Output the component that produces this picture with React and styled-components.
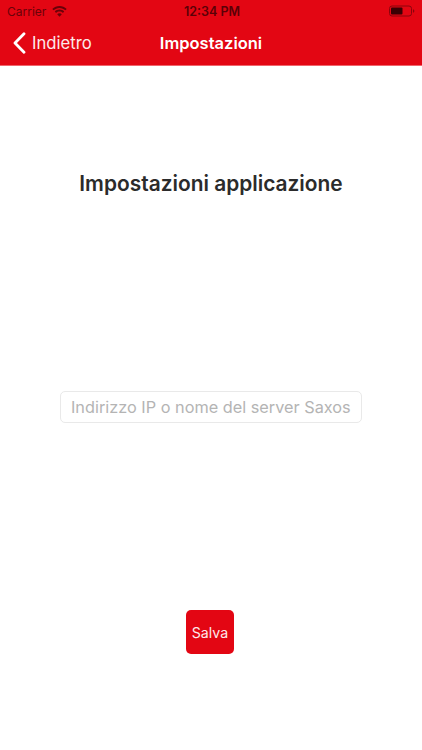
import React from "react";
import styled, { createGlobalStyle } from "styled-components";

const GlobalStyle = createGlobalStyle`
  html, body { margin: 0; padding: 0; background: #fff; }
  body { font-family: Inter, "Liberation Sans", sans-serif; }
`;

const Page = styled.div`
  width: 422px;
  height: 750px;
  display: flex;
  flex-direction: column;
  overflow: hidden;
`;

const Header = styled.header`
  height: 65px;
  background: #e30613;
  border-bottom: 1px solid #f0656c;
  box-sizing: content-box;
  display: flex;
  flex-direction: column;
`;

const StatusBar = styled.div`
  height: 22px;
  padding: 0 7px;
  display: grid;
  grid-template-columns: 1fr auto 1fr;
  align-items: center;
  color: #6a0209;
  font-size: 12px;
`;

const Carrier = styled.div`
  display: flex;
  align-items: center;
  gap: 6px;
`;

const Clock = styled.div`
  font-weight: 600;
  font-size: 12.5px;
  color: #5a0107;
  margin-left: 2px;
`;

const BatteryWrap = styled.div`
  justify-self: end;
  display: flex;
`;

const NavBar = styled.div`
  flex: 1;
  position: relative;
  display: flex;
  align-items: center;
  justify-content: center;
  color: #fff;
`;

const Back = styled.div`
  position: absolute;
  left: 13px;
  top: 0;
  bottom: 2px;
  display: flex;
  align-items: center;
  gap: 6px;
  font-size: 16.7px;
  color: #fde9ea;
`;

const NavTitle = styled.div`
  font-size: 16.5px;
  font-weight: 600;
  margin-bottom: 2px;
`;

const Main = styled.main`
  flex: 1;
  display: flex;
  flex-direction: column;
  align-items: center;
`;

const Title = styled.h1`
  margin: 105px 0 0;
  font-size: 20.9px;
  line-height: 26px;
  font-weight: 600;
  color: #2b2b2b;
`;

const Field = styled.input`
  margin-top: 194px;
  width: 302px;
  height: 32px;
  box-sizing: border-box;
  padding: 0 10px;
  border: 1px solid #e9e9e9;
  border-radius: 5px;
  font-family: inherit;
  font-size: 16.3px;
  background: #fff;
  &::placeholder { color: #b4b4b4; opacity: 1; }
`;

const SaveButton = styled.button`
  margin-top: 187px;
  margin-right: 2px;
  width: 48px;
  height: 44px;
  padding: 0;
  border: none;
  border-radius: 5px;
  background: #e30613;
  color: #fde9ea;
  font-family: inherit;
  font-size: 14.2px;
`;

const Wifi = () => (
  <svg width="15" height="11" viewBox="0 0 15 11" fill="#6a0209">
    <path d="M7.5 0C4.7 0 2.2 1.1.3 2.9l1.3 1.4C3.1 2.8 5.2 1.9 7.5 1.9s4.4.9 5.9 2.4l1.3-1.4C12.8 1.1 10.3 0 7.5 0z" />
    <path d="M7.5 3.6c-1.8 0-3.5.7-4.7 1.9l1.3 1.4c.9-.9 2.1-1.4 3.4-1.4s2.5.5 3.4 1.4l1.3-1.4C11 4.3 9.3 3.6 7.5 3.6z" />
    <path d="M7.5 7.2c-.9 0-1.7.4-2.3 1l2.3 2.6 2.3-2.6c-.6-.6-1.4-1-2.3-1z" />
  </svg>
);

const Battery = () => (
  <svg width="26" height="12" viewBox="0 0 26 12">
    <rect x="0.5" y="1" width="22" height="10" rx="2.5" fill="none" stroke="#8a040c" />
    <rect x="2" y="2.5" width="11.5" height="7" rx="1" fill="#3a0004" />
    <path d="M24 4.2c.9.3 1.3 1 1.3 1.8s-.4 1.5-1.3 1.8z" fill="#8a040c" />
  </svg>
);

const Chevron = () => (
  <svg width="13" height="22" viewBox="0 0 13 22" fill="none">
    <path d="M11 1.8 2 11l9 9.2" stroke="#fff" strokeWidth="2.8" strokeLinecap="round" strokeLinejoin="round" />
  </svg>
);

export default function App() {
  return (
    <Page>
      <GlobalStyle />
      <Header>
        <StatusBar>
          <Carrier>
            Carrier <Wifi />
          </Carrier>
          <Clock>12:34 PM</Clock>
          <BatteryWrap>
            <Battery />
          </BatteryWrap>
        </StatusBar>
        <NavBar>
          <Back>
            <Chevron />
            Indietro
          </Back>
          <NavTitle>Impostazioni</NavTitle>
        </NavBar>
      </Header>
      <Main>
        <Title>Impostazioni applicazione</Title>
        <Field placeholder="Indirizzo IP o nome del server Saxos" />
        <SaveButton>Salva</SaveButton>
      </Main>
    </Page>
  );
}
